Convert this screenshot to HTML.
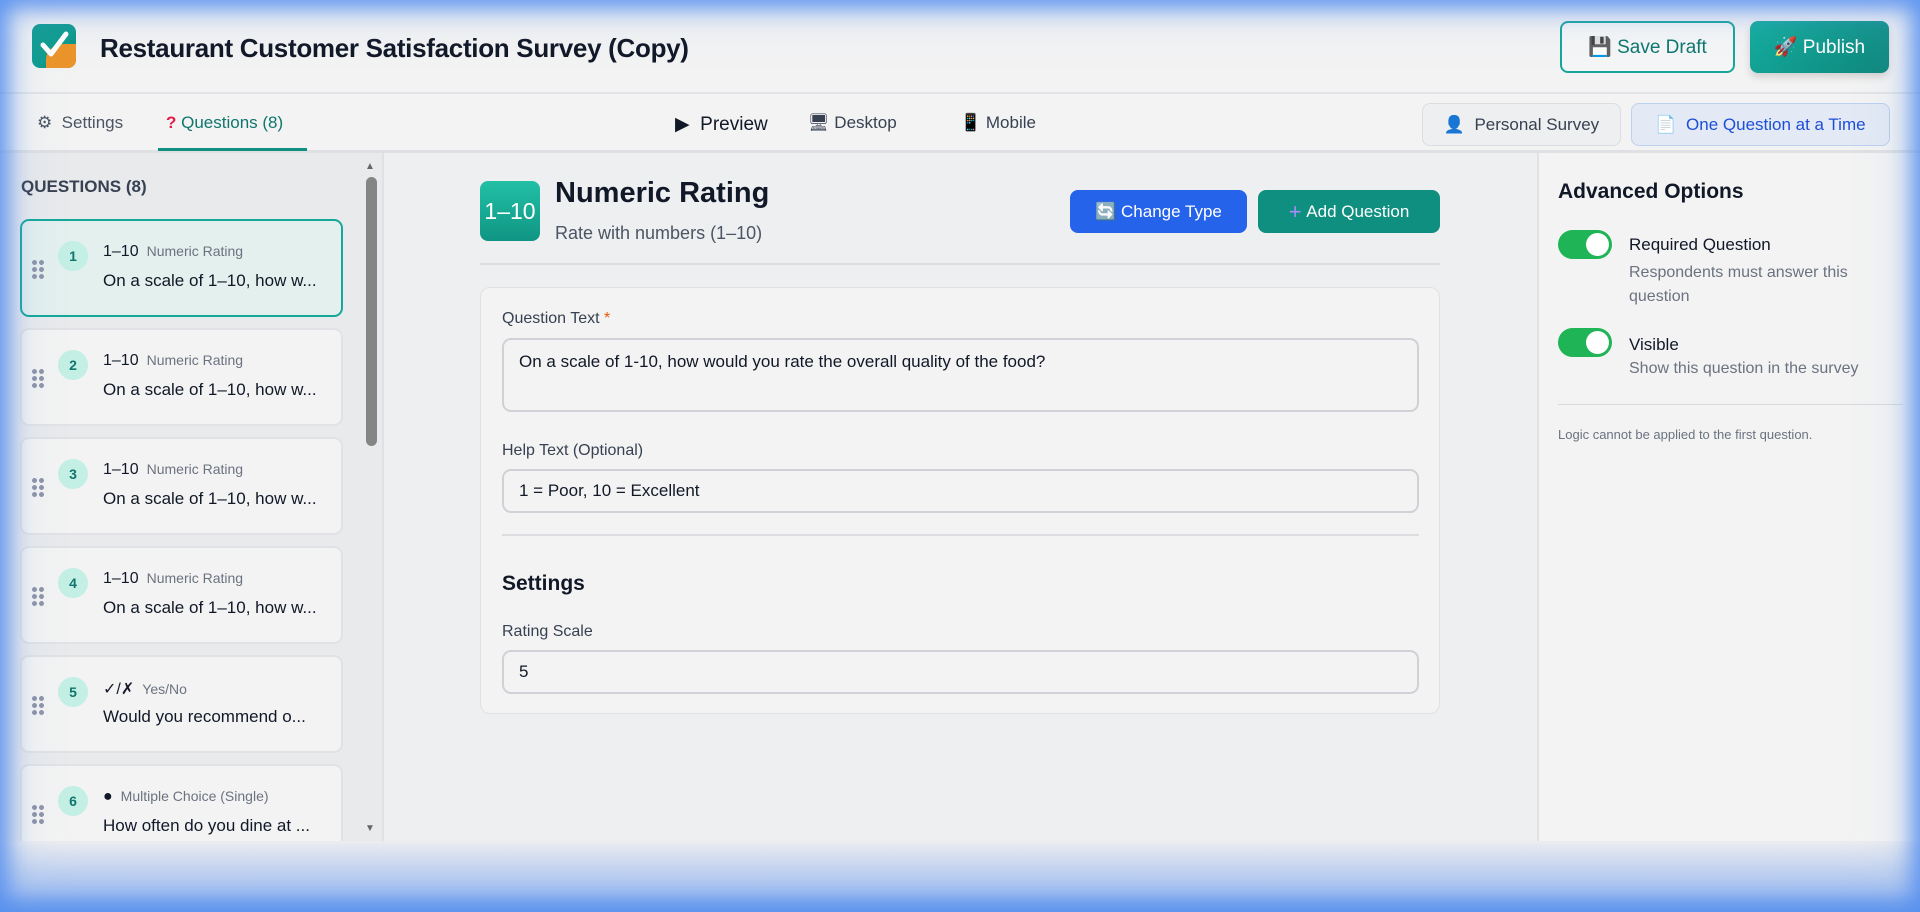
<!DOCTYPE html>
<html><head><meta charset="utf-8"><style>
*{box-sizing:border-box;margin:0;padding:0}
body{width:1920px;height:912px;overflow:hidden;background:#eeeff1;font-family:"Liberation Sans",sans-serif;color:#111827;position:relative}
.abs{position:absolute}
#hdr{left:0;top:0;width:1920px;height:94px;background:#f3f3f3;border-bottom:2px solid #e2e3e6}
#tabs{left:0;top:94px;width:1920px;height:59px;background:#f3f3f3;border-bottom:3px solid #dfe0e3}
.btn{position:absolute;display:flex;align-items:center;justify-content:center;border-radius:8px;font-size:19px}
#left{left:0;top:153px;width:384px;height:688px;background:#e9eaec;border-right:2px solid #e0e1e4;overflow:hidden}
.card{position:absolute;left:20px;width:323px;height:98px;background:#f3f3f3;border:2px solid #e1e2e5;border-radius:9px}
.card.sel{background:#e4f0ee;border-color:#14a89a}
.dots{position:absolute;left:9px;top:38px;width:14px;height:20px;background-image:radial-gradient(circle,#8d94a8 2.3px,transparent 2.6px);background-size:7px 7px}
.num{position:absolute;left:36px;top:20px;width:30px;height:30px;border-radius:50%;background:#c3efe4;color:#0f766e;font-size:14px;font-weight:bold;display:flex;align-items:center;justify-content:center}
.t1{position:absolute;left:81px;top:22px;font-size:16px;white-space:nowrap}
.t1 span{font-size:14px;color:#6b7280;margin-left:8px}
.t2{position:absolute;left:81px;top:50px;font-size:17px;white-space:nowrap}
#right{left:1537px;top:153px;width:383px;height:688px;background:#f3f3f3;border-left:2px solid #e0e1e4}
.tog{position:absolute;width:54px;height:29px;border-radius:15px;background:#1fb556}
.tog:after{content:"";position:absolute;right:3px;top:3px;width:23px;height:23px;border-radius:50%;background:#fff}
.lbl{position:absolute;font-size:16px;color:#374151}
.inp{position:absolute;left:21px;width:917px;border:2px solid #cfd1d6;border-radius:9px;background:#f3f3f3;font-size:17px;padding:0 15px;display:flex;align-items:center}
#glow{left:0;top:0;width:1920px;height:912px;pointer-events:none;box-shadow:inset 0 0 22px 8px rgba(86,143,238,.95),inset 0 0 60px 6px rgba(120,165,240,.25)}
#bot{left:0;top:841px;width:1920px;height:71px;background:linear-gradient(#ecedf0,#a9c3f0 70%,#7ca6ee)}
</style></head><body>
<div id="hdr" class="abs">
  <div class="abs" style="left:32px;top:24px;width:44px;height:44px;border-radius:8px;background:linear-gradient(135deg,#0e9c8e 55%,#0b7f76);overflow:hidden">
    <div class="abs" style="left:14px;top:20px;width:36px;height:30px;border-radius:50% 0 0 0;background:#ec9428"></div>
    <svg class="abs" style="left:0;top:0" width="44" height="44"><path d="M11 21 L19 30 L34 10" stroke="#fff" stroke-width="5" fill="none" stroke-linecap="round" stroke-linejoin="round"/></svg>
  </div>
  <div class="abs" style="left:100px;top:33px;font-size:26px;font-weight:bold;letter-spacing:-.3px">Restaurant Customer Satisfaction Survey (Copy)</div>
  <div class="btn" style="left:1560px;top:21px;width:175px;height:52px;border:2px solid #18a59a;color:#0f766e;background:#f5f6f6">💾&nbsp;Save Draft</div>
  <div class="btn" style="left:1750px;top:21px;width:139px;height:52px;background:linear-gradient(135deg,#14ad9e,#0f877c);color:#fff;box-shadow:0 4px 8px rgba(0,0,0,.15)">🚀&nbsp;Publish</div>
</div>
<div id="tabs" class="abs">
  <div class="abs" style="left:37px;top:19px;font-size:17px;color:#4b5563">⚙&nbsp; Settings</div>
  <div class="abs" style="left:166px;top:19px;font-size:17px;color:#0f766e"><span style="color:#e11d48;font-weight:bold">?</span> Questions (8)</div>
  <div class="abs" style="left:158px;top:54px;width:149px;height:3px;background:#0f8f80"></div>
  <div class="abs" style="left:675px;top:19px;font-size:19px">▶&nbsp; Preview</div>
  <div class="abs" style="left:808px;top:19px;font-size:17px;color:#374151">🖥 Desktop</div>
  <div class="abs" style="left:960px;top:19px;font-size:17px;color:#374151">📱 Mobile</div>
  <div class="btn" style="left:1422px;top:9px;width:199px;height:43px;border:1px solid #dcdde0;background:#eeeff1;font-size:17px;color:#374151">👤&nbsp; Personal Survey</div>
  <div class="btn" style="left:1631px;top:9px;width:259px;height:43px;border:1px solid #bcd0f0;background:#e3eaf5;font-size:17px;color:#1d4ed8">📄&nbsp; One Question at a Time</div>
</div>
<div id="left" class="abs">
  <div class="abs" style="left:21px;top:24px;font-size:17px;font-weight:bold;color:#374151">QUESTIONS (8)</div>
  <div class="abs" style="left:365px;top:8px;font-size:10px;color:#666">▲</div>
  <div class="abs" style="left:366px;top:24px;width:11px;height:269px;border-radius:6px;background:#858585"></div>
  <div class="abs" style="left:365px;top:670px;font-size:10px;color:#666">▼</div>
  <div class="card sel" style="top:66px"><div class="dots"></div><div class="num">1</div><div class="t1">1–10<span>Numeric Rating</span></div><div class="t2">On a scale of 1–10, how w...</div></div>
  <div class="card" style="top:175px"><div class="dots"></div><div class="num">2</div><div class="t1">1–10<span>Numeric Rating</span></div><div class="t2">On a scale of 1–10, how w...</div></div>
  <div class="card" style="top:284px"><div class="dots"></div><div class="num">3</div><div class="t1">1–10<span>Numeric Rating</span></div><div class="t2">On a scale of 1–10, how w...</div></div>
  <div class="card" style="top:393px"><div class="dots"></div><div class="num">4</div><div class="t1">1–10<span>Numeric Rating</span></div><div class="t2">On a scale of 1–10, how w...</div></div>
  <div class="card" style="top:502px"><div class="dots"></div><div class="num">5</div><div class="t1">✓/✗<span>Yes/No</span></div><div class="t2">Would you recommend o...</div></div>
  <div class="card" style="top:611px"><div class="dots"></div><div class="num">6</div><div class="t1">●<span>Multiple Choice (Single)</span></div><div class="t2">How often do you dine at ...</div></div>
</div>
<div class="abs" style="left:480px;top:181px;width:60px;height:60px;border-radius:8px;background:linear-gradient(#22c0a6,#0f9583);color:#fff;font-size:23px;display:flex;align-items:center;justify-content:center">1–10</div>
<div class="abs" style="left:555px;top:177px;font-size:29px;font-weight:bold">Numeric Rating</div>
<div class="abs" style="left:555px;top:223px;font-size:18px;color:#4b5563">Rate with numbers (1–10)</div>
<div class="btn" style="left:1070px;top:190px;width:177px;height:43px;background:#2563eb;color:#fff;font-size:17px">🔄&nbsp;Change Type</div>
<div class="btn" style="left:1258px;top:190px;width:182px;height:43px;background:#0f8f80;color:#fff;font-size:17px"><span style="color:#a78bfa;font-size:22px">+</span>&nbsp;Add Question</div>
<div class="abs" style="left:480px;top:263px;width:960px;height:2px;background:#dcdde0"></div>
<div class="abs" style="left:480px;top:287px;width:960px;height:427px;background:#f3f3f3;border:1px solid #e0e1e4;border-radius:10px">
  <div class="lbl" style="left:21px;top:22px">Question Text <span style="color:#ea580c">*</span></div>
  <div class="inp" style="top:50px;height:74px;align-items:flex-start;padding-top:12px">On a scale of 1-10, how would you rate the overall quality of the food?</div>
  <div class="lbl" style="left:21px;top:154px">Help Text (Optional)</div>
  <div class="inp" style="top:181px;height:44px">1 = Poor, 10 = Excellent</div>
  <div class="abs" style="left:21px;top:246px;width:917px;height:2px;background:#dcdde0"></div>
  <div class="abs" style="left:21px;top:284px;font-size:21px;font-weight:bold">Settings</div>
  <div class="lbl" style="left:21px;top:335px">Rating Scale</div>
  <div class="inp" style="top:362px;height:44px">5</div>
</div>
<div id="right" class="abs">
  <div class="abs" style="left:19px;top:27px;font-size:21px;font-weight:bold">Advanced Options</div>
  <div class="tog" style="left:19px;top:77px"></div>
  <div class="abs" style="left:90px;top:82px;font-size:17px">Required Question</div>
  <div class="abs" style="left:90px;top:108px;font-size:16px;color:#6b7280;line-height:24px;width:270px">Respondents must answer this question</div>
  <div class="tog" style="left:19px;top:175px"></div>
  <div class="abs" style="left:90px;top:182px;font-size:17px">Visible</div>
  <div class="abs" style="left:90px;top:207px;font-size:16px;color:#6b7280">Show this question in the survey</div>
  <div class="abs" style="left:19px;top:251px;width:345px;height:1px;background:#d8d9dc"></div>
  <div class="abs" style="left:19px;top:274px;font-size:13px;color:#6b7280">Logic cannot be applied to the first question.</div>
</div>
<div id="bot" class="abs"></div>
<div id="glow" class="abs"></div>
</body></html>
